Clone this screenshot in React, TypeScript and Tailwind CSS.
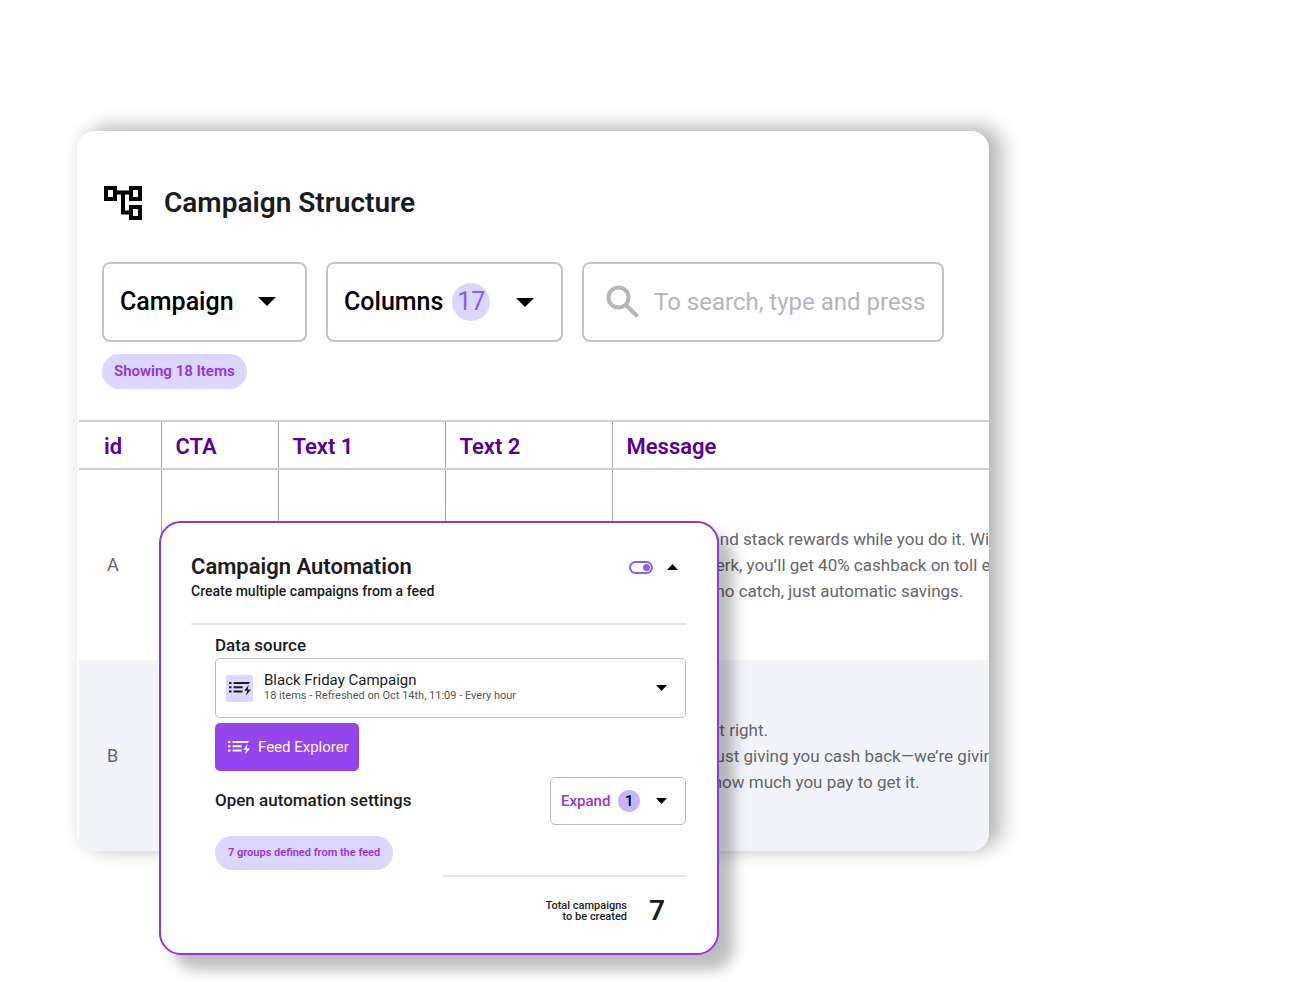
import { useState } from 'react';

type Row = { id: string; message: string[] };

const columns = ['CTA', 'Text 1', 'Text 2', 'Message'];

const rows: Row[] = [
  {
    id: 'A',
    message: [
      'Cover tolls and stack rewards while you do it. With',
      'every new perk, you’ll get 40% cashback on toll expenses,',
      'There’s still no catch, just automatic savings.',
    ],
  },
  {
    id: 'B',
    message: [
      'Well, got that right.',
      'We are not just giving you cash back—we’re giving you',
      'changes in how much you pay to get it.',
    ],
  },
];

function Caret({ className, up }: { className: string; up?: boolean }) {
  return (
    <svg className={className} viewBox="0 0 10 5" preserveAspectRatio="none" fill="currentColor" aria-hidden="true">
      <path d={up ? 'M0 5L5 0L10 5Z' : 'M0 0L5 5L10 0Z'} />
    </svg>
  );
}

function FeedIcon({ className }: { className: string }) {
  return (
    <svg className={className} viewBox="0 0 22 15" fill="currentColor" aria-hidden="true">
      <path d="M0 1h2.5v2H0zM0 5.2h2.5v2H0zM0 9.4h2.5v2H0zM4.6 1H21l-1.4 2H4.6zM4.6 5.2h9v2h-9zM4.6 9.4h9v2h-9z" />
      <path d="M19.6 4L15.2 9.8h3L17 14.6L22 8.4h-3.2z" />
    </svg>
  );
}

export default function App() {
  const [enabled, setEnabled] = useState(true);

  return (
    <div className="min-h-screen bg-white pt-[131px] pb-7 pl-[77px] pr-[320px] font-['Roboto',sans-serif]">
      <main className="relative">
        <section className="overflow-hidden rounded-[18px] bg-white shadow-[13px_-4px_20px_rgba(0,0,0,0.26),0_0_18px_rgba(0,0,0,0.08)]">
          {/* Heading */}
          <header className="flex items-center gap-[22px] pt-[52px] pl-[27px]">
            <svg className="h-10 w-[38px]" viewBox="0 0 38 40" fill="none" stroke="black" strokeWidth="4" aria-hidden="true">
              <path d="M2 5h9v11H2zM27 5h9v11h-9zM27 24h9v11h-9zM11 9.5h16M19 9.5v20h8" />
            </svg>
            <h1 className="text-[28px] leading-10 font-semibold text-[#1c1c1c]">Campaign Structure</h1>
          </header>

          {/* Filters */}
          <div className="mt-[39px] flex gap-[19px] pr-[45px] pl-[25px]">
            <div className="relative">
              <select
                aria-label="Level"
                className="h-20 w-[205px] appearance-none rounded-lg border-2 border-[#c4c4c4] bg-white pl-4 text-[25px] font-medium text-black"
              >
                <option>Campaign</option>
              </select>
              <Caret className="pointer-events-none absolute top-[35px] right-[31px] h-[9px] w-[18px]" />
            </div>
            <button
              type="button"
              aria-haspopup="true"
              className="flex h-20 w-[237px] shrink-0 items-center rounded-lg border-2 border-[#c4c4c4] pl-4 text-[25px] font-medium text-black"
            >
              Columns
              <span className="ml-[9px] flex size-[38px] items-center justify-center rounded-full bg-[#ddd6fe] font-normal text-[#8b5cf6]">
                17
              </span>
              <Caret className="ml-[26px] h-[9px] w-[18px]" />
            </button>
            <label className="flex h-20 min-w-0 flex-1 items-center rounded-lg border-2 border-[#c4c4c4] pl-[22px]">
              <svg className="size-[34px] shrink-0" viewBox="0 0 34 34" fill="none" stroke="#b5b5ba" strokeWidth="4" aria-hidden="true">
                <circle cx="12.5" cy="12.5" r="10" />
                <path d="M20 20L31.5 31.5" />
              </svg>
              <span className="sr-only">Search</span>
              <input
                type="text"
                placeholder="To search, type and press"
                className="ml-[14px] min-w-0 flex-1 text-[24px] outline-none placeholder:text-[#b5b5ba]"
              />
            </label>
          </div>
          <p className="mt-3 ml-[25px] inline-block rounded-full bg-[#ddd6fe] px-3 text-[15px] leading-[35px] font-semibold text-[#9333ea]">
            Showing 18 Items
          </p>

          <table className="mt-[31px] ml-0.5 w-[calc(100%-2px)] table-fixed border-collapse">
            <colgroup>
              <col className="w-[82px]" />
              <col className="w-[117px]" />
              <col className="w-[167px]" />
              <col className="w-[167px]" />
              <col />
            </colgroup>
            <thead>
              <tr className="h-12 border-y-2 border-[#d0d0d0] text-left text-[22px] text-[#56009c]">
                <th className="pt-[3px] pl-[25px] font-semibold">id</th>
                {columns.map((name) => (
                  <th key={name} className="border-l border-[#a8a8a8] pt-[3px] pl-[14px] font-semibold">
                    {name}
                  </th>
                ))}
              </tr>
            </thead>
            <tbody className="text-[17px] leading-[26px] text-[#666669]">
              {rows.map((row) => (
                <tr key={row.id} className="h-[191px] even:bg-[#f3f4f9]">
                  <td className="pl-7 text-[18px]">{row.id}</td>
                  <td className="border-l border-[#a8a8a8]" />
                  <td className="border-l border-[#a8a8a8]" />
                  <td className="border-l border-[#a8a8a8]" />
                  <td className="overflow-hidden border-l border-[#a8a8a8] pl-[14px] whitespace-nowrap">
                    {row.message.map((line) => (
                      <p key={line}>{line}</p>
                    ))}
                  </td>
                </tr>
              ))}
            </tbody>
          </table>
        </section>

        {/* Automation panel */}
        <section className="absolute top-[390px] left-[82px] w-[560px] rounded-[22px] border-2 border-[#9333ea] bg-white pt-[30px] pr-[31px] pb-[22px] pl-[30px] text-[#1c1c1c] shadow-[15px_15px_14px_rgba(0,0,0,0.26)]">
          <header className="flex items-start justify-between border-b-2 border-[#e5e5e5] pb-[22px]">
            <div>
              <h2 className="text-[22px] leading-7 font-semibold">Campaign Automation</h2>
              <p className="text-[14px] leading-5 font-medium">Create multiple campaigns from a feed</p>
            </div>
            <div className="flex h-7 items-center pr-2">
              <label className="relative mr-[14px] flex">
                <span className="sr-only">Campaign Automation</span>
                <input
                  type="checkbox"
                  role="switch"
                  checked={enabled}
                  onChange={() => setEnabled(!enabled)}
                  className="peer h-[13px] w-6 appearance-none rounded-full border-2 border-[#8b5cf6]"
                />
                <span className="pointer-events-none absolute top-[3px] left-1 size-[7px] rounded-full bg-[#8b5cf6] peer-checked:left-[14px]" />
              </label>
              <button type="button" aria-label="Collapse" className="text-black">
                <Caret up className="h-[6px] w-[11px]" />
              </button>
            </div>
          </header>

          <div className="pl-6">
            <h3 className="mt-2 text-[17px] leading-6 font-medium">Data source</h3>
            <button
              type="button"
              aria-haspopup="listbox"
              className="mt-px flex h-[60px] w-full items-center rounded-[5px] border border-[#bcbcbc] pr-[18px] pl-[10px] text-left"
            >
              <span className="flex size-[27px] items-center justify-center rounded-xs bg-[#ddd6fe]">
                <FeedIcon className="h-[15px] w-[22px]" />
              </span>
              <span className="ml-[11px] flex-1">
                <span className="block text-[15px] leading-4">Black Friday Campaign</span>
                <span className="block text-[11px] leading-4 text-[#555]">18 items - Refreshed on Oct 14th, 11:09 - Every hour</span>
              </span>
              <Caret className="h-[6px] w-[11px] text-black" />
            </button>
            <button
              type="button"
              className="mt-[5px] flex h-12 w-36 items-center gap-2 rounded-[5px] bg-[#9545ee] pl-[13px] text-[15px] text-white"
            >
              <FeedIcon className="h-[15px] w-[22px]" />
              Feed Explorer
            </button>

            <div className="mt-[6px] flex items-center justify-between">
              <h3 className="text-[17px] font-medium">Open automation settings</h3>
              <button
                type="button"
                aria-expanded="false"
                className="flex h-12 w-[136px] items-center rounded-[5px] border border-[#bcbcbc] pl-[10px] text-[15px] font-medium text-[#9333ea]"
              >
                Expand
                <span className="ml-2 flex size-[22px] items-center justify-center rounded-full bg-[#c4b5fd] text-black">1</span>
                <Caret className="ml-4 h-[6px] w-[11px] text-black" />
              </button>
            </div>
            <p className="mt-[11px] inline-block rounded-full bg-[#ddd6fe] px-[13px] text-[11px] leading-[34px] font-semibold text-[#9333ea]">
              7 groups defined from the feed
            </p>
          </div>

          <footer className="mt-[5px] ml-auto flex w-[243px] items-center justify-end gap-[22px] border-t-2 border-[#e5e5e5] pt-[14px] pr-[21px]">
            <p className="text-right text-[11px] leading-[11px] font-medium">
              Total campaigns
              <br />
              to be created
            </p>
            <strong className="text-[28px] leading-10 font-semibold">7</strong>
          </footer>
        </section>
      </main>
    </div>
  );
}
